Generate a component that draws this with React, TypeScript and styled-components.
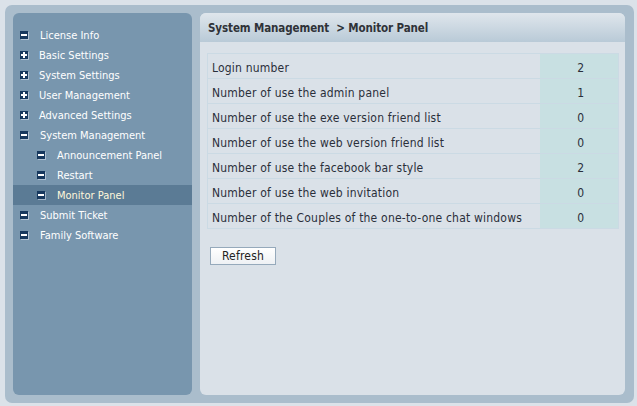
import React from "react";
import styled, { createGlobalStyle } from "styled-components";

const Global = createGlobalStyle`
  html, body { margin: 0; padding: 0; background: #dbe2e9; }
  body { font-family: "DejaVu Sans Condensed", "DejaVu Sans", sans-serif; }
  #root { padding: 5px 3px 3px 5px; }
`;

const Frame = styled.div`
  display: flex;
  gap: 8px;
  height: 398px;
  box-sizing: border-box;
  padding: 8px 9px 8px 8px;
  background: #aabdcc;
  border-radius: 7px;
`;

const Sidebar = styled.nav`
  width: 179px;
  flex: none;
  background: #7896ae;
  border-radius: 6px;
  padding-top: 12px;
  box-sizing: border-box;
`;

const NavItem = styled.div<{ $level: number; $active?: boolean }>`
  display: flex;
  align-items: center;
  height: 20px;
  padding-left: ${(p) => (p.$level ? 24 : 7)}px;
  background: ${(p) => (p.$active ? "#5b7b95" : "transparent")};
  color: ${(p) => (p.$active ? "#fff8dc" : "#ffffff")};
  font-size: 11px;
`;

const Icon = styled.span`
  position: relative;
  width: 8px;
  height: 8px;
  background: #16385e;
  box-shadow: 1px 1px 0 rgba(220, 230, 240, 0.55);
  margin-right: 12px;
  margin-top: -1px;
  flex: none;
  &::before {
    content: "";
    position: absolute;
    left: 1px;
    right: 1px;
    top: 3px;
    height: 2px;
    background: #ffffff;
  }
`;

const PlusIcon = styled(Icon)`
  margin-right: 11px;
  &::after {
    content: "";
    position: absolute;
    top: 1px;
    bottom: 1px;
    left: 3px;
    width: 2px;
    background: #ffffff;
  }
`;

const Main = styled.main`
  flex: 1;
  background: #dae1e8;
  border-radius: 6px;
  overflow: hidden;
  display: flex;
  flex-direction: column;
`;

const Header = styled.div`
  height: 29px;
  box-sizing: border-box;
  display: flex;
  align-items: center;
  padding-left: 8px;
  background: linear-gradient(#dfe6ec, #b9cad7);
  color: #2f3238;
  font-size: 11.5px;
  letter-spacing: -0.1px;
  font-weight: bold;
  white-space: pre;
`;

const Body = styled.div`
  padding: 11px 6px 0 7px;
`;

const Table = styled.table`
  width: 100%;
  border-collapse: collapse;
  font-size: 12px;
  letter-spacing: 0.2px;
  color: #2a2f3a;
`;

const LabelCell = styled.td`
  height: 25px;
  box-sizing: border-box;
  padding: 3px 0 0 4px;
  border: 1px solid #cbdae4;
  border-right: none;
`;

const ValueCell = styled.td`
  width: 79px;
  box-sizing: border-box;
  padding: 3px 0 0 4px;
  text-align: center;
  background: #c8e0e2;
  border: 1px solid #cbdae4;
  border-left: none;
`;

const Button = styled.button`
  margin: 18px 0 0 3px;
  width: 66px;
  height: 18px;
  padding: 0;
  font-family: inherit;
  font-size: 12px;
  letter-spacing: 0.2px;
  color: #222;
  background: linear-gradient(#ffffff, #eef1f4);
  border: 1px solid #95a9bb;
  border-radius: 0;
`;

const stats: [string, number][] = [
  ["Login number", 2],
  ["Number of use the admin panel", 1],
  ["Number of use the exe version friend list", 0],
  ["Number of use the web version friend list", 0],
  ["Number of use the facebook bar style", 2],
  ["Number of use the web invitation", 0],
  ["Number of the Couples of the one-to-one chat windows", 0],
];

const nav: { label: string; level: number; plus?: boolean; active?: boolean }[] = [
  { label: "License Info", level: 0 },
  { label: "Basic Settings", level: 0, plus: true },
  { label: "System Settings", level: 0, plus: true },
  { label: "User Management", level: 0, plus: true },
  { label: "Advanced Settings", level: 0, plus: true },
  { label: "System Management", level: 0 },
  { label: "Announcement Panel", level: 1 },
  { label: "Restart", level: 1 },
  { label: "Monitor Panel", level: 1, active: true },
  { label: "Submit Ticket", level: 0 },
  { label: "Family Software", level: 0 },
];

export default function App() {
  return (
    <>
      <Global />
      <Frame>
        <Sidebar>
          {nav.map((n) => (
            <NavItem key={n.label} $level={n.level} $active={n.active}>
              {n.plus ? <PlusIcon /> : <Icon />}
              {n.label}
            </NavItem>
          ))}
        </Sidebar>
        <Main>
          <Header>{"System Management  > Monitor Panel"}</Header>
          <Body>
            <Table>
              <tbody>
                {stats.map(([l, v]) => (
                  <tr key={l}>
                    <LabelCell>{l}</LabelCell>
                    <ValueCell>{v}</ValueCell>
                  </tr>
                ))}
              </tbody>
            </Table>
            <Button>Refresh</Button>
          </Body>
        </Main>
      </Frame>
    </>
  );
}
